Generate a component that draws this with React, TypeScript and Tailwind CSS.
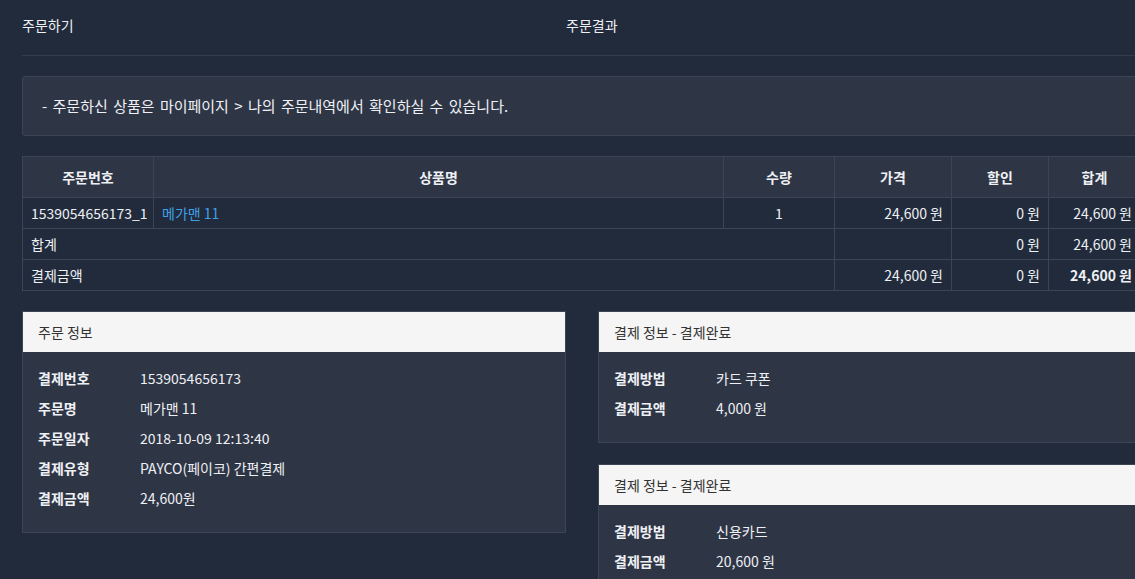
import React from 'react';

const font = { fontFamily: '"Noto Sans CJK KR", "Noto Sans", sans-serif' };

const orderInfo = [
  ['결제번호', '1539054656173'],
  ['주문명', '메가맨 11'],
  ['주문일자', '2018-10-09 12:13:40'],
  ['결제유형', 'PAYCO(페이코) 간편결제'],
  ['결제금액', '24,600원'],
];

function Panel({ title, rows }: { title: string; rows: string[][] }) {
  return (
    <div className="border border-[#3d4555]">
      <div className="h-[40px] bg-[#f5f5f5] px-[15px] flex items-center text-[#333] text-[14px]">{title}</div>
      <div className="bg-[#2e3646] px-[15px] pt-[11px] pb-[19px]">
        {rows.map(([k, v]) => (
          <div key={k} className="flex h-[30px] items-center">
            <div className="w-[102px] font-bold">{k}</div>
            <div>{v}</div>
          </div>
        ))}
      </div>
    </div>
  );
}

export default function App() {
  const cell = 'border border-[#3d4555] px-[8px]';
  return (
    <div className="w-[1135px] h-[579px] overflow-hidden bg-[#222b3c] text-[#eef0f4] text-[14px] leading-[20px]" style={font}>
      <div className="ml-[22px] w-[1118px]">
        <div className="h-[56px] flex pt-[15px] border-b border-[#353d4d]">
          <div className="w-[544px]">주문하기</div>
          <div>주문결과</div>
        </div>

        <div className="mt-[20px] h-[60px] bg-[#2e3646] border border-[#3d4555] rounded-[3px] flex items-center px-[19px] text-[15px] [word-spacing:2px]">
          - 주문하신 상품은 마이페이지 &gt; 나의 주문내역에서 확인하실 수 있습니다.
        </div>

        <table className="mt-[20px] w-[1118px] border-collapse table-fixed">
          <colgroup>
            <col className="w-[131px]" />
            <col className="w-[570px]" />
            <col className="w-[111px]" />
            <col className="w-[117px]" />
            <col className="w-[97px]" />
            <col className="w-[92px]" />
          </colgroup>
          <thead>
            <tr className="h-[41px] bg-[#2e3646] font-bold">
              <th className={cell}>주문번호</th>
              <th className={cell}>상품명</th>
              <th className={cell}>수량</th>
              <th className={cell}>가격</th>
              <th className={cell}>할인</th>
              <th className={cell}>합계</th>
            </tr>
          </thead>
          <tbody>
            <tr className="h-[31px]">
              <td className={cell}>1539054656173_1</td>
              <td className={`${cell} text-[#3fa0e6]`}>메가맨 11</td>
              <td className={`${cell} text-center`}>1</td>
              <td className={`${cell} text-right`}>24,600 원</td>
              <td className={`${cell} text-right`}>0 원</td>
              <td className={`${cell} text-right`}>24,600 원</td>
            </tr>
            <tr className="h-[31px]">
              <td className={cell} colSpan={3}>합계</td>
              <td className={cell}></td>
              <td className={`${cell} text-right`}>0 원</td>
              <td className={`${cell} text-right`}>24,600 원</td>
            </tr>
            <tr className="h-[31px]">
              <td className={cell} colSpan={3}>결제금액</td>
              <td className={`${cell} text-right`}>24,600 원</td>
              <td className={`${cell} text-right`}>0 원</td>
              <td className={`${cell} text-right font-bold`}>24,600 원</td>
            </tr>
          </tbody>
        </table>

        <div className="mt-[20px] grid grid-cols-[544px_1fr] gap-[32px] items-start">
          <Panel title="주문 정보" rows={orderInfo} />
          <div className="flex flex-col gap-[21px]">
            <Panel title="결제 정보 - 결제완료" rows={[['결제방법', '카드 쿠폰'], ['결제금액', '4,000 원']]} />
            <Panel title="결제 정보 - 결제완료" rows={[['결제방법', '신용카드'], ['결제금액', '20,600 원']]} />
          </div>
        </div>
      </div>
    </div>
  );
}
